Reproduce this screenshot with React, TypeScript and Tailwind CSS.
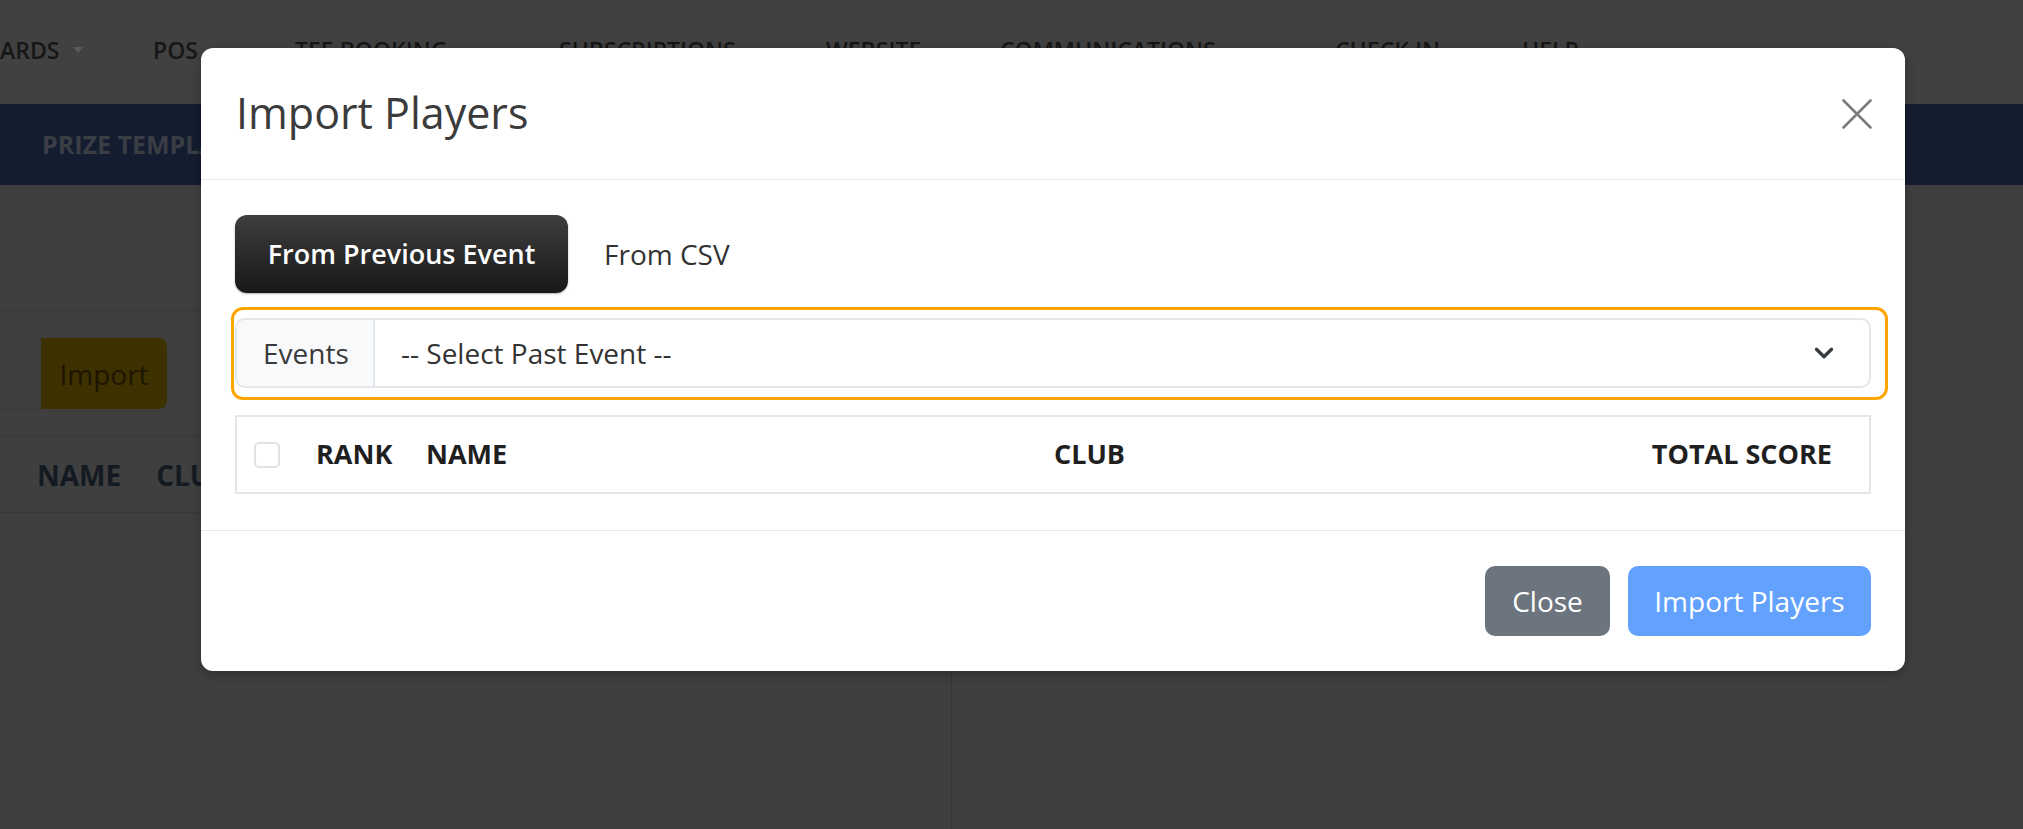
import { ChevronDown } from 'lucide-react'

const NAV_ITEMS = [
 { label: 'ARDS', w: 'w-[153px]', caret: true },
 { label: 'POS', w: 'w-[142px]' },
 { label: 'TEE BOOKING', w: 'w-[264px]' },
 { label: 'SUBSCRIPTIONS', w: 'w-[267px]' },
 { label: 'WEBSITE', w: 'w-[174px]' },
 { label: 'COMMUNICATIONS', w: 'w-[335px]' },
 { label: 'CHECK IN', w: 'w-[187px]' },
 { label: 'HELP', w: 'w-[120px]' },
]

function Page() {
 return (
  <div className="flex h-full flex-col">
   <nav className="flex h-[104px] shrink-0 items-center bg-[#414141] pb-[4px] text-[23px] font-semibold text-[#161616]">
    {NAV_ITEMS.map(n => (
     <span key={n.label} className={`${n.w} flex shrink-0 items-center`}>
      {n.label}
      {n.caret && <span className="ml-[14px] inline-block h-0 w-0 border-x-[5px] border-t-[6px] border-x-transparent border-t-[#5a5a5a]" />}
     </span>
    ))}
   </nav>
   <div className="flex h-[81px] shrink-0 items-center bg-[#131d2f] pl-[42px] text-[25px] font-bold text-[#3a3d44]">
    PRIZE TEMPLATES
   </div>
   <div className="flex flex-1">
    <div className="w-[952px] border-r border-[#373737]">
     <div className="h-[126px] border-b border-[#393939]" />
     <div className="flex h-[126px] items-center border-b border-[#393939]">
      <div className="h-[71px] w-[41px] border-y border-[#3a3a3a]" />
      <div className="flex h-[71px] w-[126px] items-center justify-center rounded-r-[8px] bg-[#3d3100] text-[28px] text-[#1c1600]">
       Import
      </div>
     </div>
     <div className="flex h-[76px] items-center border-b border-[#393939] text-[28px] font-bold text-[#141a22]">
      <span className="ml-[37px]">NAME</span>
      <span className="ml-[35px]">CLUB</span>
     </div>
    </div>
    <div className="flex-1" />
   </div>
  </div>
 )
}

function Modal() {
 return (
  <div className="absolute left-[201px] top-[48px] w-[1704px] rounded-[12px] bg-white shadow-[0_4px_12px_rgba(0,0,0,0.25)]">
   <div className="flex h-[132px] items-center justify-between border-b border-[#e3e7ec] pl-[35px] pr-[33px]">
    <h1 className="text-[43px] font-normal text-[#3b3b3b]">Import Players</h1>
    <svg width="30" height="30" viewBox="0 0 30 30" className="text-[#7b7b7b]">
     <path d="M1.5 1.5 L28.5 28.5 M28.5 1.5 L1.5 28.5" stroke="currentColor" strokeWidth="2.6" strokeLinecap="round" fill="none" />
    </svg>
   </div>

   <div className="px-[34px] pb-[36px] pt-[35px]">
    <div className="flex items-center">
     <button className="flex h-[78px] w-[333px] items-center justify-center rounded-[12px] bg-gradient-to-b from-[#3e3e3e] to-[#191919] text-[27px] font-semibold text-white shadow-[0_1px_2px_rgba(0,0,0,0.3)]">
      From Previous Event
     </button>
     <span className="ml-[36px] text-[28px] text-[#333]">From CSV</span>
    </div>

    <div className="relative mt-[25px]">
     <div className="absolute -bottom-[12px] -left-[4px] -right-[17px] -top-[11px] rounded-[12px] border-[3px] border-[#ffa500]" />
     <div className="relative flex h-[70px] items-stretch overflow-hidden rounded-[10px] border-2 border-[#e3e6ea]">
      <div className="flex w-[138px] items-center border-r-2 border-[#e3e6ea] bg-[#f8f9fa] pl-[26px] text-[28px] text-[#3a3a3a]">
       Events
      </div>
      <div className="flex flex-1 items-center justify-between pl-[26px] pr-[30px] text-[28px] text-[#333]">
       <span>-- Select Past Event --</span>
       <ChevronDown className="h-[30px] w-[30px] text-[#343a40]" strokeWidth={2.6} />
      </div>
     </div>
    </div>

    <div className="mt-[27px] flex h-[79px] items-center border-2 border-[#e4e6e9] pl-[17px] pr-[37px] text-[27px] font-bold text-[#1f1f1f]">
     <span className="h-[26px] w-[26px] rounded-[5px] border-2 border-[#dfe2e6]" />
     <span className="ml-[36px] w-[110px]">RANK</span>
     <span className="w-[628px]">NAME</span>
     <span>CLUB</span>
     <span className="ml-auto">TOTAL SCORE</span>
    </div>
   </div>

   <div className="flex justify-end gap-[18px] border-t border-[#e3e7ec] pb-[35px] pr-[34px] pt-[35px]">
    <button className="h-[70px] w-[125px] rounded-[10px] bg-[#6c757d] text-[28px] text-white">Close</button>
    <button className="h-[70px] w-[243px] rounded-[10px] bg-[#62a1fe] text-[28px] text-white">Import Players</button>
   </div>
  </div>
 )
}

export default function App() {
 return (
  <div className="relative h-[829px] w-[2023px] overflow-hidden bg-[#3f3f3f] font-['Open_Sans',sans-serif]">
   <Page />
   <Modal />
  </div>
 )
}
